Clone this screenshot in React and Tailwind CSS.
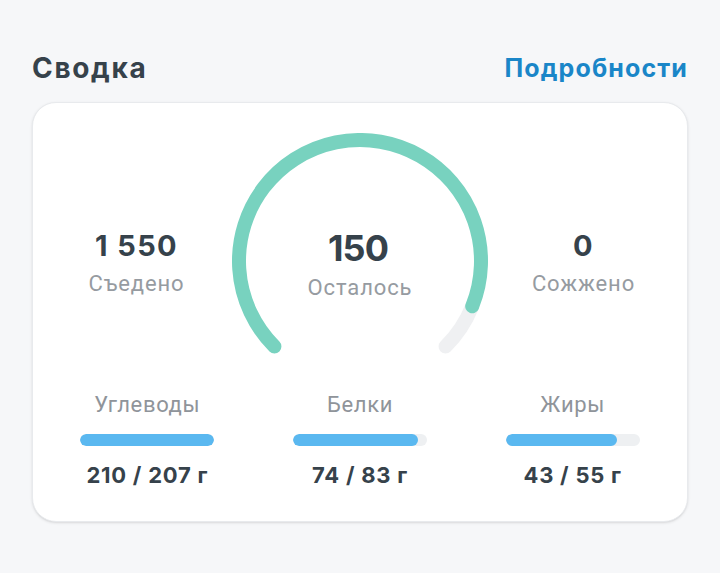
import React from 'react';

const macros = [
  { name: 'Углеводы', eaten: 210, goal: 207, fill: 100 },
  { name: 'Белки', eaten: 74, goal: 83, fill: 93 },
  { name: 'Жиры', eaten: 43, goal: 55, fill: 83 },
];

// point on circle, angle in degrees, screen coords (clockwise)
const pt = (deg, r = 121, c = 128) => {
  const a = (deg * Math.PI) / 180;
  return [c + r * Math.cos(a), c + r * Math.sin(a)];
};

const Gauge = () => {
  const [sx, sy] = pt(135);
  const [mx, my] = pt(22);
  const [ex, ey] = pt(45);
  return (
    <svg width="256" height="222" viewBox="0 0 256 222" fill="none">
      <path d={`M ${mx} ${my} A 121 121 0 0 1 ${ex} ${ey}`} stroke="#eff0f2" strokeWidth="14" strokeLinecap="round" />
      <path d={`M ${sx} ${sy} A 121 121 0 1 1 ${mx} ${my}`} stroke="#78d2bf" strokeWidth="14" strokeLinecap="round" />
    </svg>
  );
};

const Stat = ({ value, label }) => (
  <div className="flex-1 flex flex-col items-center pt-[96px]">
    <span className="text-[29px] leading-[34px] font-bold tracking-[0.05em] text-[#36424b] font-['Inter',sans-serif]">{value}</span>
    <span className="mt-[8px] text-[22px] leading-[26px] tracking-[0.04em] text-[#969ba1] font-['Roboto',sans-serif]">{label}</span>
  </div>
);

export default function App() {
  return (
    <div className="min-h-[573px] bg-[#f6f7f9] px-8 pt-[50px]">
      <div className="flex items-center justify-between mb-4">
        <h1 className="text-[28px] leading-[36px] font-bold tracking-[0.06em] text-[#36424b] font-['Inter',sans-serif]">Сводка</h1>
        <button className="text-[25px] leading-[36px] font-bold tracking-[0.045em] text-[#1a86c8] font-['Inter',sans-serif]">Подробности</button>
      </div>

      <div className="bg-white rounded-[24px] border border-[#e8eaed] shadow-sm px-2 pt-[30px] pb-[33px]">
        <div className="flex items-start">
          <Stat value="1 550" label="Съедено" />
          <div className="relative w-[256px] h-[222px]">
            <Gauge />
            <div className="absolute left-0 right-0 top-[93px] flex flex-col items-center">
              <span className="-ml-1 text-[36px] leading-[44px] font-bold text-[#36424b] font-['Inter',sans-serif] tracking-tight">150</span>
              <span className="mt-[5px] text-[22px] leading-[26px] tracking-[0.04em] text-[#969ba1] font-['Roboto',sans-serif]">Осталось</span>
            </div>
          </div>
          <Stat value="0" label="Сожжено" />
        </div>

        <div className="grid grid-cols-3 mt-[37px]">
          {macros.map((m) => (
            <div key={m.name} className="flex flex-col items-center">
              <span className="text-[22px] leading-[26px] tracking-[0.03em] text-[#8f949a] font-['Roboto',sans-serif]">{m.name}</span>
              <div className="mt-4 w-[134px] h-3 rounded-full bg-[#eef0f2] overflow-hidden">
                <div className="h-full rounded-full bg-[#5ab8f0]" style={{ width: `${m.fill}%` }} />
              </div>
              <span className="mt-4 text-[22px] leading-[26px] font-bold tracking-[0.035em] text-[#36424b] font-['Inter',sans-serif]">
                {m.eaten} / {m.goal} г
              </span>
            </div>
          ))}
        </div>
      </div>
    </div>
  );
}
